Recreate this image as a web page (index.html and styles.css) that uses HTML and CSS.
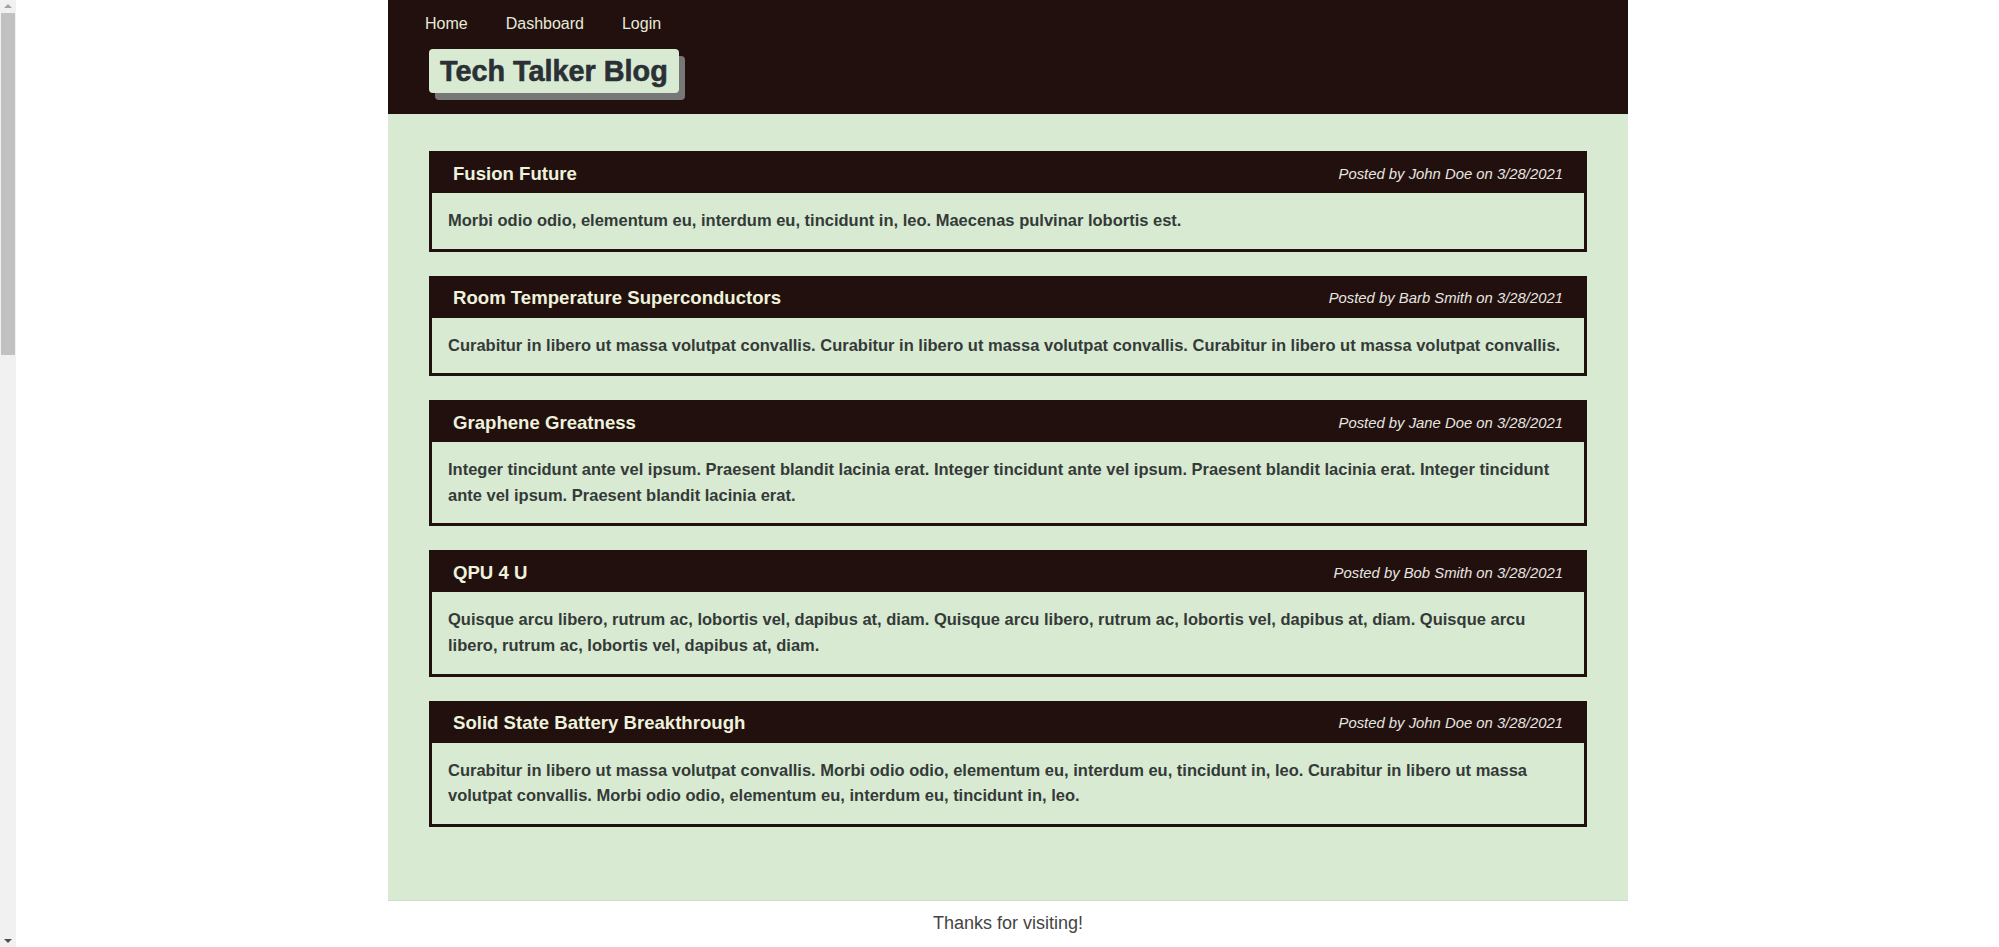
FILE: index.html
```html
<!DOCTYPE html>
<html lang="en">
<head>
<meta charset="utf-8">
<title>Tech Talker Blog</title>
<link rel="stylesheet" href="styles.css">
</head>
<body>
<div class="scrollbar" aria-hidden="true">
  <span class="sb-arrow sb-up"></span>
  <span class="sb-track"><span class="sb-thumb"></span></span>
  <span class="sb-arrow sb-down"></span>
</div>
<div class="page">
  <header class="site-header">
    <nav class="nav">
      <a href="#" class="nav-link">Home</a>
      <a href="#" class="nav-link">Dashboard</a>
      <a href="#" class="nav-link">Login</a>
    </nav>
    <h1 class="logo">Tech Talker Blog</h1>
  </header>
  <main class="posts">
    <article class="post">
      <div class="post-head"><h2 class="post-title">Fusion Future</h2><span class="post-meta">Posted by John Doe on 3/28/2021</span></div>
      <p class="post-body">Morbi odio odio, elementum eu, interdum eu, tincidunt in, leo. Maecenas pulvinar lobortis est.</p>
    </article>
    <article class="post">
      <div class="post-head"><h2 class="post-title">Room Temperature Superconductors</h2><span class="post-meta">Posted by Barb Smith on 3/28/2021</span></div>
      <p class="post-body">Curabitur in libero ut massa volutpat convallis. Curabitur in libero ut massa volutpat convallis. Curabitur in libero ut massa volutpat convallis.</p>
    </article>
    <article class="post">
      <div class="post-head"><h2 class="post-title">Graphene Greatness</h2><span class="post-meta">Posted by Jane Doe on 3/28/2021</span></div>
      <p class="post-body">Integer tincidunt ante vel ipsum. Praesent blandit lacinia erat. Integer tincidunt ante vel ipsum. Praesent blandit lacinia erat. Integer tincidunt ante vel ipsum. Praesent blandit lacinia erat.</p>
    </article>
    <article class="post">
      <div class="post-head"><h2 class="post-title">QPU 4 U</h2><span class="post-meta">Posted by Bob Smith on 3/28/2021</span></div>
      <p class="post-body">Quisque arcu libero, rutrum ac, lobortis vel, dapibus at, diam. Quisque arcu libero, rutrum ac, lobortis vel, dapibus at, diam. Quisque arcu libero, rutrum ac, lobortis vel, dapibus at, diam.</p>
    </article>
    <article class="post">
      <div class="post-head"><h2 class="post-title">Solid State Battery Breakthrough</h2><span class="post-meta">Posted by John Doe on 3/28/2021</span></div>
      <p class="post-body">Curabitur in libero ut massa volutpat convallis. Morbi odio odio, elementum eu, interdum eu, tincidunt in, leo. Curabitur in libero ut massa volutpat convallis. Morbi odio odio, elementum eu, interdum eu, tincidunt in, leo.</p>
    </article>
  </main>
  <footer class="site-footer">Thanks for visiting!</footer>
</div>
</body>
</html>
```

FILE: styles.css
```css
body {
  margin: 0;
  padding-left: 17px;
  background: #ffffff;
  font-family: "Liberation Sans", Arial, sans-serif;
}

.scrollbar {
  position: fixed;
  left: 0;
  top: 0;
  width: 16px;
  height: 100vh;
  background: #f1f1f1;
  display: flex;
  flex-direction: column;
  align-items: center;
}

.sb-arrow {
  width: 0;
  height: 0;
  border-left: 4px solid transparent;
  border-right: 4px solid transparent;
}

.sb-up {
  margin: 4px 0 5px;
  border-bottom: 4px solid #a3a3a3;
}

.sb-down {
  margin: 5px 0 4px;
  border-top: 4px solid #505050;
}

.sb-track {
  flex: 1;
  width: 100%;
  padding: 0 1px;
  box-sizing: border-box;
}

.sb-thumb {
  display: block;
  height: 342px;
  background: #c1c1c1;
}

.page {
  width: 1240px;
  margin: 0 auto;
}

.site-header {
  background: #22100e;
  padding: 15px 41px 21px;
  display: flex;
  flex-direction: column;
  align-items: flex-start;
}

.nav {
  display: flex;
  gap: 38px;
  margin-left: -4px;
  line-height: 18px;
}

.nav-link {
  color: #e8ead8;
  text-decoration: none;
  font-size: 16px;
}

.logo {
  margin: 16px 0 0;
  padding: 6px 11px;
  background: #d9ead3;
  color: #2b3035;
  font-size: 28.8px;
  font-weight: bold;
  line-height: 32px;
  -webkit-text-stroke: 0.6px #2b3035;
  border-radius: 4px;
  box-shadow: 6px 7px 0 #777777;
}

.posts {
  background: #d9ead3;
  padding: 37px 41px 73px;
  display: flex;
  flex-direction: column;
  gap: 24px;
  border-bottom: 1px solid #cfdcca;
}

.post {
  border: 3px solid #22100e;
}

.post-head {
  background: #22100e;
  height: 39px;
  display: flex;
  align-items: center;
  justify-content: space-between;
  padding: 0 21px 0 21px;
}

.post-title {
  margin: 0;
  font-size: 18.6px;
  font-weight: bold;
  color: #eef2dc;
}

.post-meta {
  font-size: 14.85px;
  font-style: italic;
  color: #e6e6e0;
}

.post-body {
  margin: 0;
  padding: 15px 16px;
  font-size: 16.5px;
  font-weight: bold;
  line-height: 25.6px;
  color: #343a38;
}

.site-footer {
  text-align: center;
  padding-top: 12px;
  font-size: 18px;
  color: #444444;
}
```
